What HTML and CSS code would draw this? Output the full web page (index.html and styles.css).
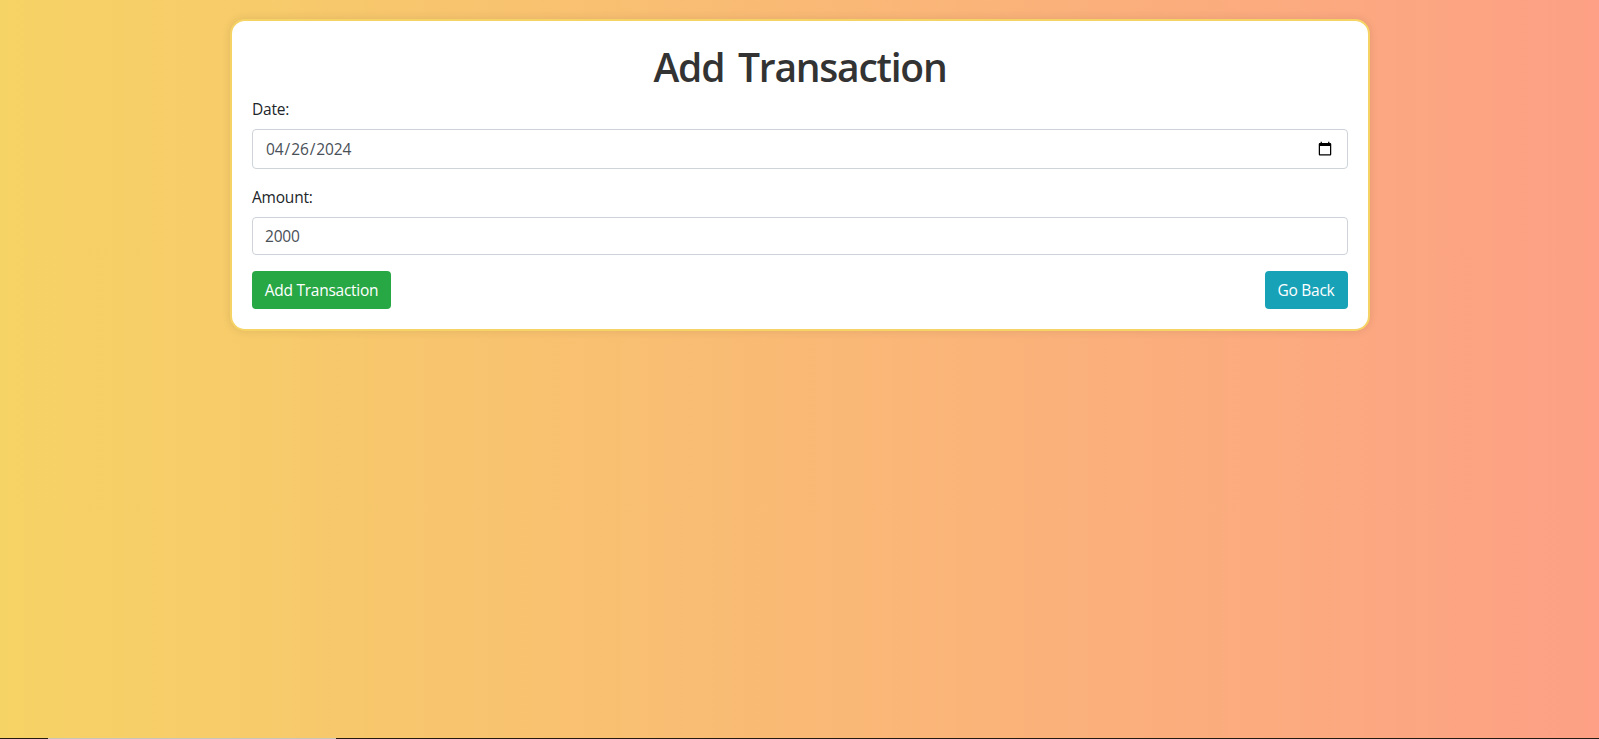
FILE: index.html
```html
<!DOCTYPE html>
<html lang="en">
<head>
<meta charset="utf-8">
<title>Add Transaction</title>
<link rel="stylesheet" href="styles.css">
</head>
<body>
<main class="container">
  <h1 class="title">Add Transaction</h1>
  <form>
    <div class="form-group">
      <label class="label" for="date">Date:</label>
      <input class="form-control date" type="date" id="date" value="2024-04-26">
    </div>
    <div class="form-group">
      <label class="label" for="amount">Amount:</label>
      <input class="form-control amount" type="text" id="amount" value="2000">
    </div>
    <div class="actions">
      <button class="btn btn-success" type="button">Add Transaction</button>
      <button class="btn btn-info" type="button">Go Back</button>
    </div>
  </form>
</main>
<footer class="edge"><div class="edge-light"></div></footer>
</body>
</html>
```

FILE: styles.css
```css
*, *::before, *::after { box-sizing: border-box; }
body {
  margin: 0;
  height: 739px;
  padding-top: 19px;
  display: flex;
  flex-direction: column;
  align-items: center;
  overflow: hidden;
  background: linear-gradient(to right, #f6d365, #fda085);
  font-family: "Open Sans", "Noto Sans", sans-serif;
  font-size: 16px;
  line-height: 24px;
  color: #212529;
}
.container {
  width: 1140px;
  padding: 20px;
  background: #fff;
  border: 2px solid #f6d365;
  border-radius: 15px;
  box-shadow: 0 0 10px rgba(0, 0, 0, 0.1);
}
.title {
  margin: 0;
  padding: 2px 0 6px 1px;
  font-size: 39px;
  line-height: 48px;
  font-weight: 600;
  text-align: center;
  color: #333;
  letter-spacing: -1.25px;
  word-spacing: 5px;
}
.form-group { margin-bottom: 16px; }
.label {
  display: block;
  margin-bottom: 8px;
  padding-left: 0.5px;
  font-size: 15.5px;
  letter-spacing: -0.2px;
}
.form-control {
  display: block;
  width: 100%;
  height: 38px;
  padding: 6px 12px 6px 12.5px;
  border: 1px solid #ced4da;
  border-radius: 4px;
  background: #fff;
  color: #495057;
  font: 15.5px/24px "Open Sans", "Noto Sans", sans-serif;
  letter-spacing: -0.2px;
}
.date { height: 40px; letter-spacing: -0.1px; }
.actions { display: flex; justify-content: space-between; }
.btn {
  height: 38px;
  padding: 0 0 0 1px;
  border: 0;
  border-radius: 4px;
  color: #fff;
  font: 15.5px/24px "Open Sans", "Noto Sans", sans-serif;
  letter-spacing: -0.25px;
}
.btn-success { width: 139px; background: #28a745; }
.btn-info { width: 83px; padding-left: 0; background: #17a2b8; }
.edge {
  width: 100%;
  height: 1px;
  margin-top: auto;
  padding-left: 48px;
  background: #241a12;
}
.edge-light { width: 288px; height: 1px; background: #c9c5b8; }
```
